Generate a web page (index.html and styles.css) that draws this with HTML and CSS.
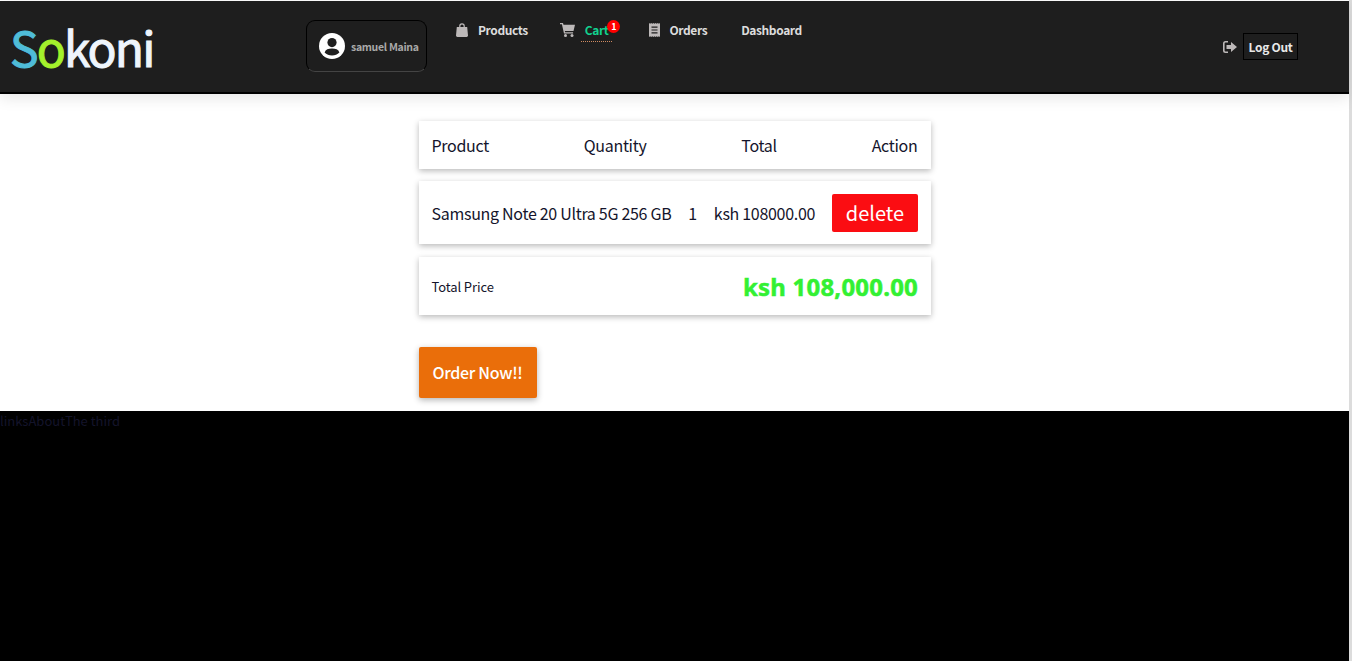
FILE: index.html
```html
<!DOCTYPE html>
<html lang="en">
  <head>
    <meta charset="UTF-8" />
    <title>Sokoni</title>
    <link rel="stylesheet" href="styles.css">
  </head>
  <body>
    <div class="page">
      <header class="topbar">
        <a class="logo"><span class="logo-s">S</span><span class="logo-o">o</span>koni</a>
        <div class="profile">
          <svg class="avatar" viewBox="0 0 26 26">
            <circle cx="13" cy="13" r="13" fill="#fff" />
            <circle cx="13" cy="9.6" r="4.6" fill="#1e1e1e" />
            <path d="M5.6 19.4c.9-2.9 3.8-3.9 7.4-3.9s6.5 1 7.4 3.9c-1.9 1.9-4.5 3-7.4 3s-5.5-1.1-7.4-3z" fill="#1e1e1e" />
          </svg>
          <span class="profile-name">samuel Maina</span>
        </div>
        <nav class="nav">
          <a class="nav-link products">
            <svg class="nav-icon bag-icon" viewBox="0 0 12 14"><path d="M3.2 4V3a2.8 2.8 0 0 1 5.6 0v1h2.4l.8 8.5a1.4 1.4 0 0 1-1.4 1.500H1.400A1.400 1.400 0 0 1 0 12.500L.8 4zm1.200 0h3.200V3a1.600 1.600 0 0 0-3.200 0z" fill="#bdb9b9" /></svg>
            Products
          </a>
          <a class="nav-link cart">
            <svg class="nav-icon cart-icon" viewBox="0 0 15 14"><path d="M0 0h3l.5 1.700H15l-1.500 6.300H4.800l.3 1.300h8v1.200H4L1.900 1.200H0z" fill="#bdb9b9" /><circle cx="5.500" cy="12.500" r="1.500" fill="#bdb9b9" /><circle cx="12" cy="12.500" r="1.500" fill="#bdb9b9" /></svg>
            <span class="cart-label">Cart<span class="badge">1</span></span>
          </a>
          <a class="nav-link orders">
            <svg class="nav-icon orders-icon" viewBox="0 0 11 14"><path d="M0 0l1.100.8L2.200 0l1.100.8L4.400 0l1.100.8L6.600 0l1.100.8L8.800 0l1.100.8L11 0v14l-1.100-.8-1.100.8-1.100-.8-1.100.8-1.100-.8-1.100.8-1.100-.8-1.100.8-1.100-.8L0 14z" fill="#bdb9b9" /><path d="M2.500 3.500h6v1.200h-6zm0 2.900h6v1.200h-6zm0 2.900h6v1.200h-6z" fill="#1e1e1e" /></svg>
            Orders
          </a>
          <a class="nav-link">Dashboard</a>
        </nav>
        <div class="logout">
          <svg class="logout-icon" viewBox="0 0 14 12"><path d="M5 0v1.600H2.500a.9.9 0 0 0-.9.9v7c0 .5.4.9.9.9H5V12H2.500A2.500 2.500 0 0 1 0 9.500v-7A2.500 2.500 0 0 1 2.500 0z" fill="#bdb9b9" /><path d="M8 1l6 5-6 5V8H3.500V4H8z" fill="#bdb9b9" /></svg>
          <button class="logout-btn">Log Out</button>
        </div>
      </header>

      <main class="cart-page">
        <div class="card row head-row">
          <span>Product</span>
          <span>Quantity</span>
          <span>Total</span>
          <span>Action</span>
        </div>
        <div class="card row item-row">
          <span>Samsung Note 20 Ultra 5G 256 GB</span>
          <span>1</span>
          <span>ksh 108000.00</span>
          <button class="delete-btn">delete</button>
        </div>
        <div class="card row total-row">
          <span class="total-label">Total Price</span>
          <span class="total-price">ksh 108,000.00</span>
        </div>
        <button class="order-btn">Order Now!!</button>
      </main>

      <footer class="footer">
        <span>links</span><span>About</span><span>The third</span>
      </footer>
    </div>
  </body>
</html>
```

FILE: styles.css
```css
html,
body {
  margin: 0;
  height: 100%;
  background-color: #dcdcdc;
}

body {
  font-family: "Noto Sans CJK SC", "Noto Sans", sans-serif;
  color: #111;
  overflow: hidden;
}

.page {
  width: 1349px;
  height: 661px;
  display: flex;
  flex-direction: column;
  background-color: #fff;
}

/* top bar */
.topbar {
  margin-top: 1px;
  height: 91px;
  flex-shrink: 0;
  display: flex;
  align-items: flex-start;
  background-color: #1e1e1e;
  border-bottom: 2px solid #000;
  box-shadow: 0 4px 14px rgba(0, 0, 0, 0.1);
}

.logo {
  margin: 15px 0 0 10px;
  width: 296px;
  font-size: 48px;
  line-height: 60px;
  letter-spacing: -1.9px;
  -webkit-text-stroke: 1px;
  color: #eef5fc;
}

.logo-s {
  color: #4fbcd8;
}

.logo-o {
  color: #a4f12c;
}

.profile {
  margin-top: 19px;
  width: 121px;
  height: 52px;
  box-sizing: border-box;
  padding-left: 12px;
  display: flex;
  align-items: center;
  gap: 6px;
  border: 1px solid #000;
  border-bottom-color: #444;
  border-radius: 9px;
}

.avatar {
  width: 26px;
  height: 26px;
  flex-shrink: 0;
}

.profile-name {
  font-size: 10.5px;
  letter-spacing: -0.3px;
  font-weight: 700;
  color: #a9a9a9;
  white-space: nowrap;
}

.nav {
  margin: 19px 0 0 29px;
  display: flex;
  align-items: flex-start;
}

.nav-link {
  display: flex;
  align-items: flex-start;
  gap: 10px;
  font-size: 12px;
  letter-spacing: -0.4px;
  line-height: 20px;
  font-weight: 700;
  color: #dcdcdc;
  white-space: nowrap;
}

.nav-icon {
  margin-top: 3px;
  height: 14px;
}

.bag-icon {
  width: 12px;
}

.cart-icon {
  width: 15px;
}

.orders-icon {
  width: 11px;
}

.products {
  margin-right: 32px;
}

.cart {
  gap: 6px;
  margin-right: 37px;
}

.orders {
  gap: 9px;
  margin-right: 34px;
}

.cart-label {
  position: relative;
  padding: 0 4px 1px;
  color: #12d18e;
  border-bottom: 1px dotted #d08a60;
}

.badge {
  position: absolute;
  top: 0;
  right: -8px;
  width: 13px;
  height: 13px;
  border-radius: 50%;
  background-color: #f00;
  color: #fff;
  font-size: 9px;
  letter-spacing: 0;
  line-height: 13px;
  text-align: center;
}

.logout {
  margin: 32px 51px 0 auto;
  display: flex;
  align-items: center;
  gap: 6px;
}

.logout-icon {
  width: 14px;
  height: 12px;
}

.logout-btn {
  height: 27px;
  width: 55px;
  padding: 0;
  font-family: inherit;
  font-size: 12px;
  letter-spacing: -0.3px;
  font-weight: 700;
  color: #e8e8e8;
  background: none;
  border: 1px solid #000;
}

/* cart */
.cart-page {
  width: 512px;
  margin: 27px auto 0;
  height: 290px;
  flex-shrink: 0;
  display: flex;
  flex-direction: column;
  align-items: flex-start;
}

.card {
  background-color: #fff;
  box-shadow: 0 2px 6px rgba(0, 0, 0, 0.28);
  width: 100%;
  box-sizing: border-box;
}

.row {
  display: flex;
  justify-content: space-between;
  align-items: center;
  padding: 0 13px 0 13px;
  font-size: 16px;
  letter-spacing: -0.3px;
  color: #14142b;
}

.head-row {
  height: 48px;
  margin-bottom: 12px;
}

.item-row {
  height: 63px;
  margin-bottom: 13px;
  padding-right: 12.5px;
}

.total-row {
  height: 58px;
  padding-right: 12.5px;
}

.total-label {
  font-size: 13px;
  letter-spacing: -0.1px;
}

.total-price {
  font-family: "Noto Sans", sans-serif;
  font-size: 24px;
  letter-spacing: 0.2px;
  font-weight: 700;
  -webkit-text-stroke: 0.5px;
  color: #33f033;
}

.delete-btn {
  width: 86px;
  height: 38px;
  padding: 0;
  font-family: inherit;
  font-size: 20px;
  letter-spacing: 0;
  color: #fff;
  background-color: #fb0d12;
  border: none;
  border-radius: 2px;
}

.order-btn {
  margin-top: 32px;
  width: 118px;
  height: 51px;
  padding: 0 0 2px;
  font-family: inherit;
  font-size: 16px;
  letter-spacing: -0.3px;
  font-weight: 500;
  color: #fff;
  background-color: #ea6e0a;
  border: none;
  border-radius: 2px;
  box-shadow: 0 2px 6px rgba(0, 0, 0, 0.3);
}

/* footer */
.footer {
  flex: 1;
  background-color: #000;
  color: #14142b;
  font-size: 13px;
  line-height: 20px;
}
```
